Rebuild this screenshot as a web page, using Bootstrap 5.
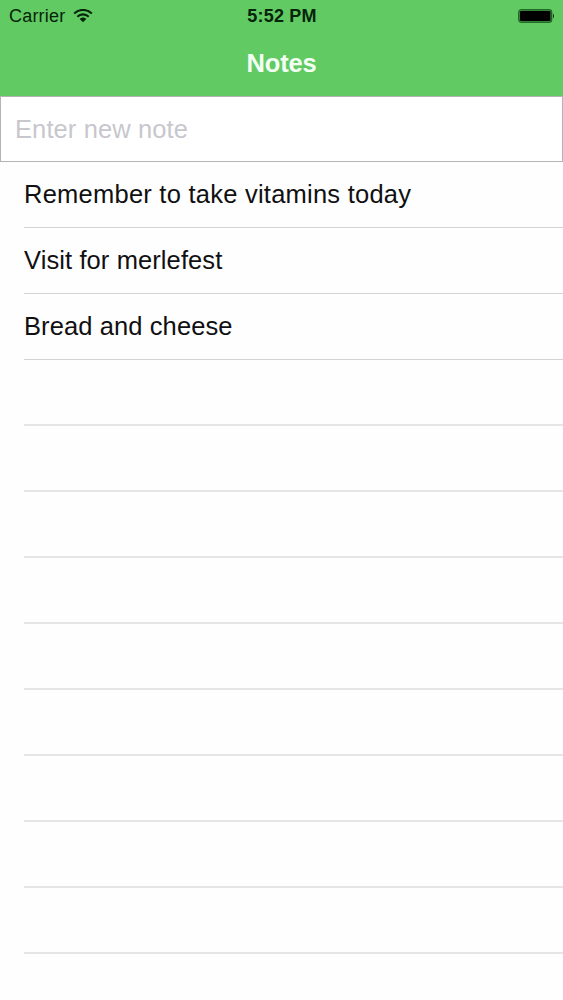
<!DOCTYPE html>
<html lang="en">
<head>
<meta charset="utf-8">
<meta name="viewport" content="width=device-width, initial-scale=1">
<title>Notes</title>
<link href="https://cdn.jsdelivr.net/npm/bootstrap@5.3.0/dist/css/bootstrap.min.css" rel="stylesheet">
<style>
body { font-family: "Liberation Sans", Arial, sans-serif; color: #101012; background: #fefefe; }
.top-bar { background: #61ca63; height: 96px; color: #f4fff4; }
.status-bar { height: 32px; color: #06240a; font-size: 18px; line-height: 32px; padding: 0 8px 0 9px; }
.status-side { flex: 1 1 0; }
.carrier { letter-spacing: .2px; }
.clock { font-size: 18px; letter-spacing: .2px; }
.screen-title { font-size: 25.5px; line-height: 62px; height: 64px; letter-spacing: -.2px; }
.note-input.form-control { height: 66px; border: 1px solid #b4b4b6; padding: 0 14px; font-size: 25.5px; letter-spacing: .1px; color: #101012; background: #fff; }
.note-input::placeholder { color: #c7c7cd; opacity: 1; }
.notes-list { padding-left: 24px; }
.notes-list .list-group-item { height: 66px; padding: 0; border: 0; border-bottom: 1px solid #d2d3d6; background: transparent; color: inherit; font-size: 25.5px; line-height: 65px; letter-spacing: .1px; white-space: nowrap; }
.notes-list .list-group-item:first-child { letter-spacing: .24px; }
.notes-list .list-group-item:empty { border-bottom: 2px solid #e5e5e7; }
</style>
</head>
<body class="overflow-hidden">
<header class="top-bar">
  <div class="status-bar d-flex align-items-center">
    <div class="status-side d-flex align-items-center">
      <span class="carrier">Carrier</span>
      <svg class="ms-2" width="20" height="15" viewBox="0 0 20 15" fill="none" stroke="#06240a" stroke-width="2.1">
        <path d="M1.2 4.6C6 -.3 14 -.3 18.8 4.6M4.3 7.8c3.2-3.2 8.2-3.2 11.4 0"/>
        <path d="M6.7 9.9Q10 7.3 13.3 9.9L10 13.2Z" fill="#06240a" stroke="none"/>
      </svg>
    </div>
    <span class="clock fw-bold">5:52 PM</span>
    <div class="status-side d-flex justify-content-end">
      <svg width="37" height="14" viewBox="0 0 37 14">
        <rect x=".75" y=".75" width="33" height="12.5" rx="2" fill="#3c943f" stroke="#145118" stroke-width="1"/>
        <rect x="2" y="2" width="30.5" height="10" rx="1" fill="#000"/>
        <path d="M35 4.5q2 2.5 0 5z" fill="#06200a"/>
      </svg>
    </div>
  </div>
  <h1 class="screen-title fw-bold text-center m-0">Notes</h1>
</header>
<main>
  <input class="note-input form-control rounded-0 shadow-none" type="text" placeholder="Enter new note" aria-label="Enter new note">
  <ul class="notes-list list-group list-group-flush">
    <li class="list-group-item">Remember to take vitamins today</li>
    <li class="list-group-item">Visit for merlefest</li>
    <li class="list-group-item">Bread and cheese</li>
    <li class="list-group-item"></li>
    <li class="list-group-item"></li>
    <li class="list-group-item"></li>
    <li class="list-group-item"></li>
    <li class="list-group-item"></li>
    <li class="list-group-item"></li>
    <li class="list-group-item"></li>
    <li class="list-group-item"></li>
    <li class="list-group-item"></li>
    <li class="list-group-item border-0"></li>
  </ul>
</main>
<script src="https://cdn.jsdelivr.net/npm/bootstrap@5.3.0/dist/js/bootstrap.bundle.min.js"></script>
</body>
</html>
